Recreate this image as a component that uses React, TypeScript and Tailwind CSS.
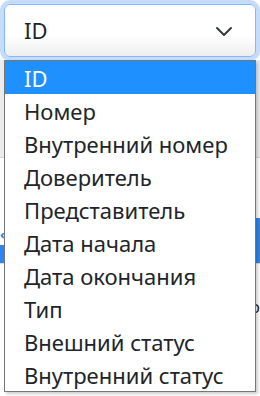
import React from 'react';

const options = [
    'ID',
    'Номер',
    'Внутренний номер',
    'Доверитель',
    'Представитель',
    'Дата начала',
    'Дата окончания',
    'Тип',
    'Внешний статус',
    'Внутренний статус',
];

const font = { fontFamily: '"Noto Sans", "Open Sans", sans-serif' };

const App: React.FC = () => {
    return (
        <div className="relative w-[260px] h-[396px] overflow-hidden bg-white flex flex-col" style={font}>
            {/* select */}
            <div className="pt-1 px-1 h-[60px] shrink-0">
                <div className="h-[53px] rounded-md border border-[#86b7fe] ring-4 ring-[#c5dcfd] bg-gradient-to-b from-white from-60% to-[#eeeeee] flex items-center justify-between pl-[19px] pr-[22px]">
                    <span className="text-[22px] text-[#212529]">ID</span>
                    <svg width="18" height="12" viewBox="0 0 18 12" fill="none">
                        <path d="M2 3l7 7 7-7" stroke="#343a40" strokeWidth="2" strokeLinecap="round" strokeLinejoin="round" />
                    </svg>
                </div>
            </div>

            {/* page behind the open list */}
            <div className="h-[98px] shrink-0 bg-[#ececec] border-b border-[#d6d6d6]" />
            <div className="h-[60px] shrink-0" />
            <div className="h-[45px] shrink-0 flex justify-between">
                <div className="flex flex-col justify-end">
                    <span className="text-[#2b7de9] text-[13px] leading-none font-bold">‹</span>
                    <div className="w-[6px] h-[18px] mt-1 bg-[#2f86f0]" />
                </div>
                <div className="w-[8px] bg-[#2f86f0]" />
            </div>
            <div className="h-[60px] shrink-0 border-t border-[#dcdcdc] flex justify-end items-end">
                <span className="text-[#222] text-[16px] leading-none pb-2">o</span>
            </div>

            {/* open list */}
            <div className="absolute left-[4px] top-[60px] w-[252px] border border-[#767676] bg-white shadow-[2px_2px_3px_rgba(0,0,0,0.2)]">
                {options.map((opt, i) => (
                    <div
                        key={opt}
                        className={
                            i === 0
                                ? 'h-[33px] pl-[19px] flex items-center text-[22px] leading-none bg-[#1e90ff] text-white'
                                : 'h-[33px] pl-[19px] flex items-center text-[22px] leading-none text-[#212529]'
                        }
                    >
                        {opt}
                    </div>
                ))}
            </div>
        </div>
    );
};

export default App;
